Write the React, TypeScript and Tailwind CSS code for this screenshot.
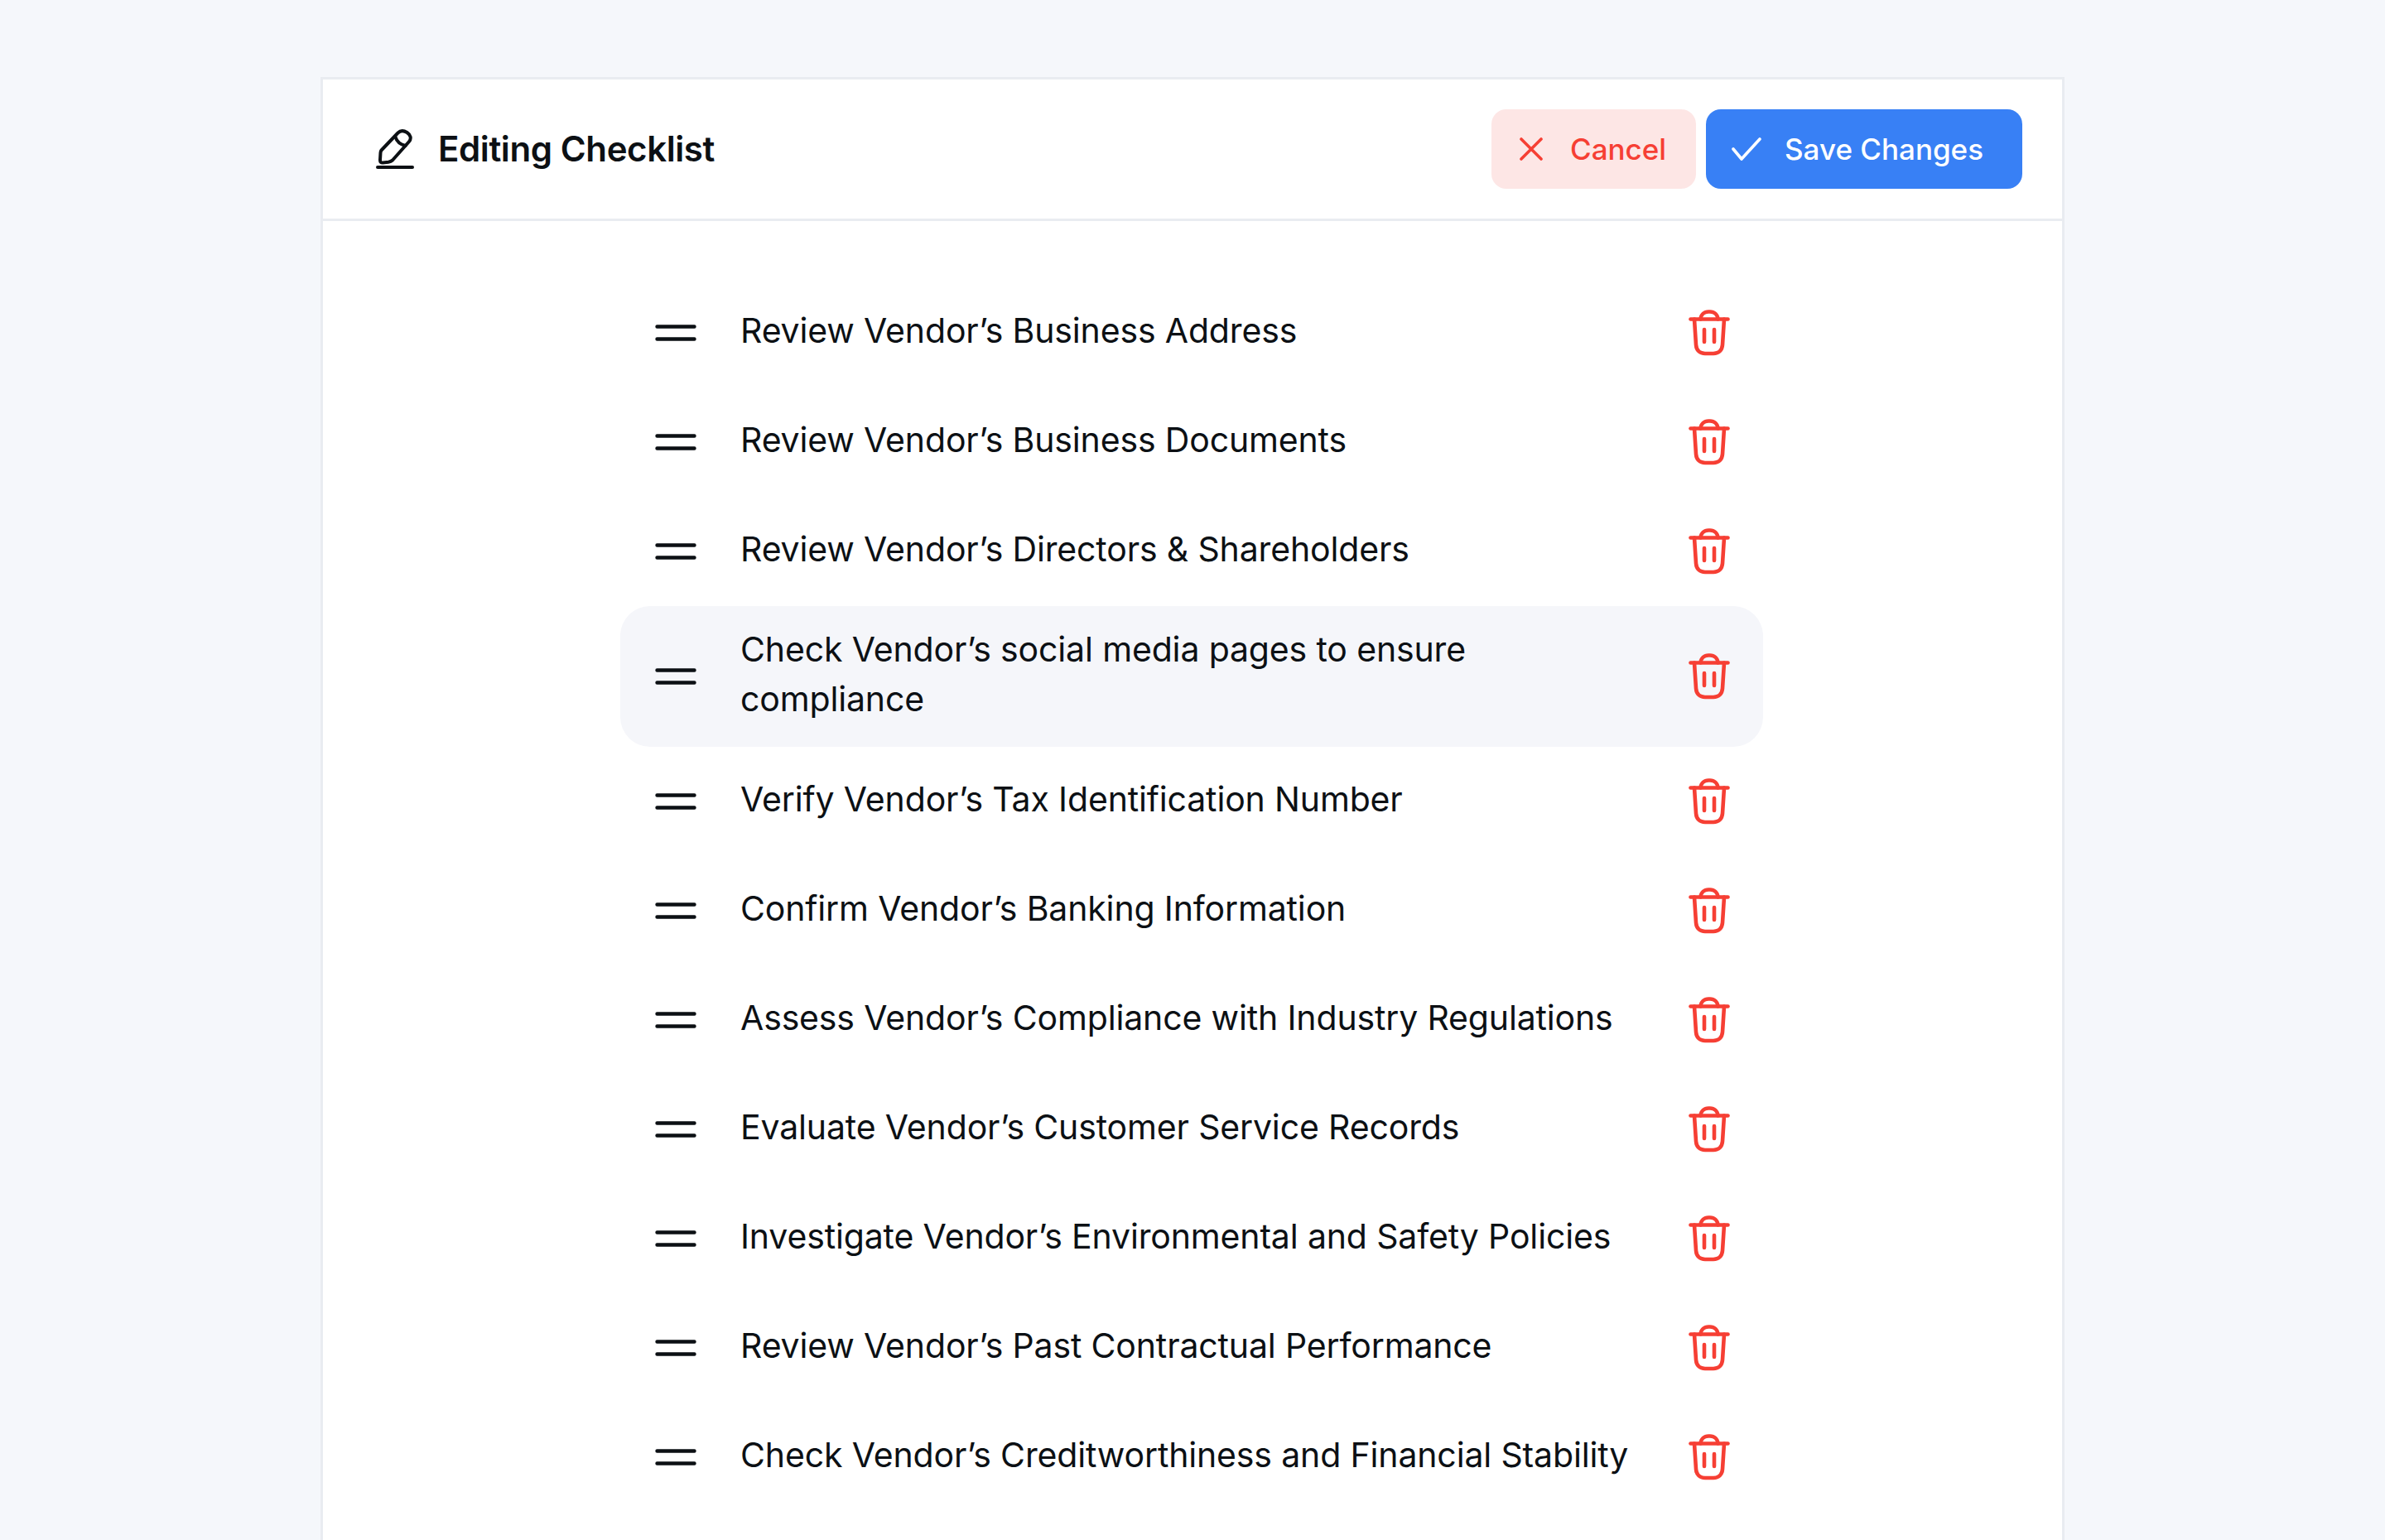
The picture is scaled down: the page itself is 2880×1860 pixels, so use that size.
import React from "react";

const items = [
  "Review Vendor’s Business Address",
  "Review Vendor’s Business Documents",
  "Review Vendor’s Directors & Shareholders",
  "Check Vendor’s social media pages to ensure compliance",
  "Verify Vendor’s Tax Identification Number",
  "Confirm Vendor’s Banking Information",
  "Assess Vendor’s Compliance with Industry Regulations",
  "Evaluate Vendor’s Customer Service Records",
  "Investigate Vendor’s Environmental and Safety Policies",
  "Review Vendor’s Past Contractual Performance",
  "Check Vendor’s Creditworthiness and Financial Stability",
];

function Handle() {
  return (
    <svg width="50" height="20" viewBox="0 0 50 20" fill="none" stroke="#0c1014" strokeWidth="4.4" strokeLinecap="round" className="shrink-0">
      <path d="M2.5 2.5H47.5M2.5 17.5H47.5" />
    </svg>
  );
}

function Trash() {
  return (
    <svg width="50" height="56" viewBox="0 0 50 56" fill="none" stroke="#f63f34" strokeWidth="4.6" strokeLinecap="round" strokeLinejoin="round" className="shrink-0">
      <path d="M2.5 11.5H47.5" />
      <path d="M14.5 11.5C15 6 19 2.5 24 2.5H26C31 2.5 35 6 35.5 11.5" />
      <path d="M7 11.5L9 42.5C9.5 49 13.5 53 20 53H30C36.5 53 40.5 49 41 42.5L43 11.5" />
      <path d="M19 24V39M31 24V39" />
    </svg>
  );
}

function Pen() {
  return (
    <svg width="46" height="48" viewBox="0 0 46 48" fill="none" stroke="#0c1014" strokeWidth="4" strokeLinecap="round" strokeLinejoin="round" className="shrink-0">
      <path d="M6.5 25.5L26.5 4.5C29.5 1.5 33.5 1.5 37.5 4C42 7 43 11.5 40 15L20 37.5C18.5 39 17 39.5 15 39.8L8.5 40.5C6 40.8 4.8 39.5 5 37L5.5 28.5C5.5 27.5 5.8 26.5 6.5 25.5Z" />
      <path d="M23.5 9.5C25 14.5 29.5 18.5 35.5 20" />
      <path d="M2 46H44" />
    </svg>
  );
}

export default function App() {
  return (
    <div className="h-[1860px] overflow-hidden bg-[#f5f7fb] pt-[93px] pl-[387px] pr-[387px] font-['Inter',sans-serif] text-[#0c1014]">
      <div className="h-[1800px] border-[3px] border-[#e9ecf1] bg-white">
        <header className="flex h-[171px] items-center justify-between border-b-[3px] border-[#e9ecf1] pl-[64px] pr-[48px]">
          <div className="flex items-center gap-[29px]">
            <Pen />
            <h1 className="text-[42px] font-semibold leading-[60px] tracking-[-0.4px]">Editing Checklist</h1>
          </div>
          <div className="flex items-center gap-[12px]">
            <button className="flex h-[96px] w-[247px] items-center gap-[33px] rounded-[18px] bg-[#fde6e5] pl-[34px] text-[35px] font-medium text-[#f63f34]">
              <svg width="28" height="28" viewBox="0 0 28 28" fill="none" stroke="#f63f34" strokeWidth="3.6" strokeLinecap="round" className="shrink-0">
                <path d="M2 2L26 26M26 2L2 26" />
              </svg>
              Cancel
            </button>
            <button className="flex h-[96px] w-[382px] items-center gap-[28px] rounded-[18px] bg-[#3880f5] pl-[31px] text-[35px] font-medium text-white">
              <svg width="36" height="28" viewBox="0 0 36 28" fill="none" stroke="#ffffff" strokeWidth="3.6" strokeLinecap="round" strokeLinejoin="round" className="shrink-0">
                <path d="M2 14L12 26L34 2" />
              </svg>
              Save Changes
            </button>
          </div>
        </header>
        <ul className="ml-[359px] mt-[69px] w-[1380px] text-[41px] leading-[60px] tracking-[-0.15px]">
          {items.map((t, i) => (
            <li key={t} className={"flex min-h-[132px] items-center justify-between py-[22px] pl-[42px] pr-[40px] " + (i === 3 ? "rounded-[36px] bg-[#f5f6fa]" : "")}>
              <Handle />
              <span className="ml-[53px] mr-auto w-[1100px] pb-[6px]">{t}</span>
              <Trash />
            </li>
          ))}
        </ul>
      </div>
    </div>
  );
}
